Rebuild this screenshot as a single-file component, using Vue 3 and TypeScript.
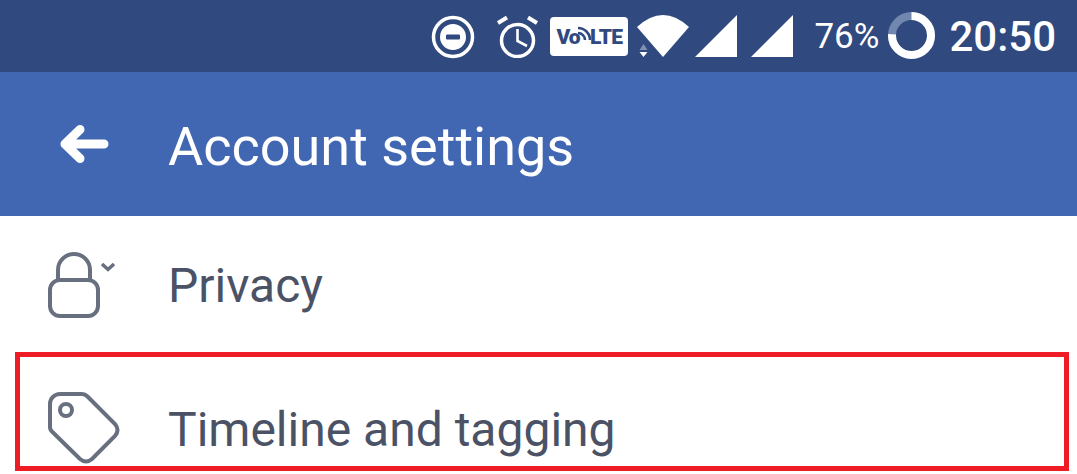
<template>
  <div class="screen">
    <div class="status-bar">
      <svg class="ic-dnd" width="44" height="44" viewBox="0 0 44 44">
        <circle cx="22" cy="22" r="19.5" fill="none" stroke="#fff" stroke-width="3.5" />
        <circle cx="22" cy="22" r="13" fill="#fff" />
        <rect x="15" y="19.5" width="14" height="5" rx="1" fill="#30497f" />
      </svg>
      <svg class="ic-alarm" width="44" height="44" viewBox="0 0 44 44">
        <circle cx="21.5" cy="26.5" r="16" fill="none" stroke="#fff" stroke-width="3.5" />
        <path d="M2 9 L11 3.5 M32 3.5 L41 9" stroke="#fff" stroke-width="4" fill="none" />
        <path d="M21.5 15 V27 L31 32" stroke="#fff" stroke-width="2.6" fill="none" />
      </svg>
      <div class="volte">
        <span class="vo">Vo</span>
        <svg class="waves" width="14" height="16" viewBox="0 0 14 16">
          <path d="M1 7 A7 7 0 0 1 8 14 M1 2 A12 12 0 0 1 13 14" fill="none" stroke="#30497f" stroke-width="2.6" />
        </svg>
        <span class="lte">LTE</span>
      </div>
      <svg class="ic-wifi" width="52" height="44" viewBox="0 0 52 44">
        <path d="M0 13 Q26 -11 52 13 L26 43 Z" fill="#fff" />
        <path d="M2.5 36 L6.5 30 L10.5 36 Z" fill="#fff" opacity="0.4" />
        <path d="M2.5 38 H10.5 L6.5 43 Z" fill="#fff" />
      </svg>
      <svg class="ic-signal" width="43" height="43" viewBox="0 0 43 43">
        <path d="M0 42 L42 0 V42 Z" fill="#fff" />
      </svg>
      <svg class="ic-signal second" width="43" height="43" viewBox="0 0 43 43">
        <path d="M0 42 L42 0 V42 Z" fill="#fff" />
      </svg>
      <span class="battery-text">76%</span>
      <svg class="ic-battery" width="47" height="47" viewBox="0 0 47 47">
        <circle cx="23.5" cy="23.5" r="19.5" fill="none" stroke="#7287ad" stroke-width="8" />
        <circle
          cx="23.5"
          cy="23.5"
          r="19.5"
          fill="none"
          stroke="#fff"
          stroke-width="8"
          pathLength="100"
          stroke-dasharray="76 100"
          transform="rotate(-90 23.5 23.5)"
        />
      </svg>
      <span class="clock">20:50</span>
    </div>

    <div class="toolbar">
      <svg class="back" width="52" height="42" viewBox="0 0 52 42">
        <path d="M23 6.5 L8 21 L23 35.5 M8 21 H47" fill="none" stroke="#fff" stroke-width="9" stroke-linecap="round" stroke-linejoin="round" />
      </svg>
      <span class="title">Account settings</span>
    </div>

    <div class="row">
      <svg class="row-icon" width="76" height="80" viewBox="0 0 76 80">
        <rect x="4" y="32" width="48" height="36" rx="10" fill="none" stroke="#686f7f" stroke-width="4" />
        <path d="M12 32 V22 a16 16 0 0 1 32 0 V32" fill="none" stroke="#686f7f" stroke-width="4" />
        <path d="M56 16 L62 21.5 L68 16" fill="none" stroke="#686f7f" stroke-width="3.5" />
      </svg>
      <span class="label">Privacy</span>
    </div>
    <div class="row">
      <svg class="row-icon" width="76" height="80" viewBox="0 0 76 80">
        <path
          d="M4 12 a10 10 0 0 1 10-10 H36 q3 0 5.5 2.5 L69 32 q5 6 0 12 L46 67 q-6 5 -12 0 L6.5 40 Q4 38 4 35 Z"
          fill="none"
          stroke="#686f7f"
          stroke-width="4"
        />
        <circle cx="20" cy="18" r="6" fill="none" stroke="#686f7f" stroke-width="4" />
      </svg>
      <span class="label">Timeline and tagging</span>
    </div>

    <!-- annotation drawn on top of the screenshot -->
    <div class="highlight"></div>
  </div>
</template>

<script setup lang="ts">
</script>

<style>
html,
body {
  margin: 0;
  background: #fff;
}
</style>

<style scoped>
.screen {
  position: relative;
  width: 1077px;
  height: 474px;
  overflow: hidden;
  background: #fff;
  font-family: Roboto, "Liberation Sans", sans-serif;
}
.status-bar {
  display: flex;
  align-items: center;
  justify-content: flex-end;
  height: 72px;
  padding-right: 21px;
  box-sizing: border-box;
  background: #30497f;
  color: #fff;
}
.status-bar svg {
  flex: none;
  display: block;
}
.ic-dnd {
  margin-top: 2px;
}
.ic-alarm {
  margin-left: 21px;
}
.volte {
  position: relative;
  display: flex;
  align-items: center;
  justify-content: space-between;
  width: 78px;
  height: 39px;
  padding: 2px 6px 0;
  box-sizing: border-box;
  margin-left: 10px;
  margin-top: 1px;
  background: #fff;
  border-radius: 4px;
  color: #30497f;
  font-weight: 900;
  font-size: 21px;
  line-height: 1;
}
.vo {
  letter-spacing: -1px;
}
.status-bar .waves {
  position: absolute;
  left: 27px;
  top: 9px;
}
.lte {
  letter-spacing: -0.6px;
}
.ic-wifi {
  margin-left: 9px;
}
.ic-signal {
  margin-left: 6px;
}
.ic-signal.second {
  margin-left: 13px;
}
.battery-text {
  margin-left: 20px;
  font-size: 35px;
}
.ic-battery {
  margin-left: 9px;
  margin-top: -1px;
}
.clock {
  margin-left: 14px;
  font-size: 42px;
  font-weight: 500;
}
.toolbar {
  display: flex;
  align-items: center;
  height: 144px;
  padding-left: 57px;
  background: #4267b2;
  color: #fff;
}
.title {
  margin-left: 59px;
  padding-top: 5px;
  font-size: 54px;
}
.row {
  display: flex;
  align-items: center;
  height: 144px;
  padding-left: 46px;
}
.row-icon {
  flex: none;
}
.label {
  margin-left: 46px;
  padding-bottom: 5px;
  font-size: 48px;
  color: #4b5266;
}
.highlight {
  position: absolute;
  left: 15px;
  top: 352px;
  width: 1054px;
  height: 119px;
  box-sizing: border-box;
  border: 5px solid #ee1c25;
}
</style>
